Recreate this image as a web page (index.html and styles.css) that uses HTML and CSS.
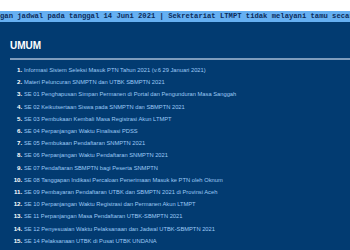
FILE: index.html
```html
<!DOCTYPE html>
<html lang="id">
<head>
<meta charset="utf-8">
<title>LTMPT - Umum</title>
<link rel="stylesheet" href="styles.css">
</head>
<body>
<div class="topbar"></div>
<div class="ticker">gan jadwal pada tanggal 14 Juni 2021 | Sekretariat LTMPT tidak melayani tamu secara langsung</div>
<main class="content">
  <h2 class="title">UMUM</h2>
  <div class="rule"></div>
  <ol class="list">
    <li>Informasi Sistem Seleksi Masuk PTN Tahun 2021 (v.6 29 Januari 2021)</li>
    <li>Materi Peluncuran SNMPTN dan UTBK SBMPTN 2021</li>
    <li>SE 01 Penghapusan Simpan Permanen di Portal dan Pengunduran Masa Sanggah</li>
    <li>SE 02 Keikutsertaan Siswa pada SNMPTN dan SBMPTN 2021</li>
    <li>SE 03 Pembukaan Kembali Masa Registrasi Akun LTMPT</li>
    <li>SE 04 Perpanjangan Waktu Finalisasi PDSS</li>
    <li>SE 05 Pembukaan Pendaftaran SNMPTN 2021</li>
    <li>SE 06 Perpanjangan Waktu Pendaftaran SNMPTN 2021</li>
    <li>SE 07 Pendaftaran SBMPTN bagi Peserta SNMPTN</li>
    <li>SE 08 Tanggapan Indikasi Percaloan Penerimaan Masuk ke PTN oleh Oknum</li>
    <li>SE 09 Pembayaran Pendaftaran UTBK dan SBMPTN 2021 di Provinsi Aceh</li>
    <li>SE 10 Perpanjangan Waktu Registrasi dan Permanen Akun LTMPT</li>
    <li>SE 11 Perpanjangan Masa Pendaftaran UTBK-SBMPTN 2021</li>
    <li>SE 12 Penyesuaian Waktu Pelaksanaan dan Jadwal UTBK-SBMPTN 2021</li>
    <li>SE 14 Pelaksanaan UTBK di Pusat UTBK UNDANA</li>
  </ol>
</main>
</body>
</html>
```
FILE: styles.css
```css
html, body {
  margin: 0;
  padding: 0;
}
body {
  background: #023b71;
  font-family: "Liberation Sans", Arial, sans-serif;
  overflow: hidden;
}
.topbar {
  height: 11px;
  background: #ffffff;
}
.ticker {
  height: 11px;
  line-height: 11px;
  background: #66b0f2;
  color: #0c2c5c;
  font-family: "Liberation Mono", "Courier New", monospace;
  font-weight: bold;
  font-size: 7.2px;
  white-space: nowrap;
  overflow: hidden;
}
.content {
  padding: 0 0 0 10px;
}
.title {
  margin: 0;
  padding-top: 18px;
  font-size: 10px;
  line-height: 11px;
  font-weight: bold;
  color: #ffffff;
}
.rule {
  margin-top: 7px;
  height: 2px;
  background: #7e9cbd;
}
.list {
  margin: 4px 0 0 0;
  padding-left: 14px;
  font-size: 5.75px;
  line-height: 12.2px;
  color: #9cc9f5;
}
.list li::marker {
  color: #ffffff;
  font-weight: bold;
  font-size: 6.2px;
}
```
